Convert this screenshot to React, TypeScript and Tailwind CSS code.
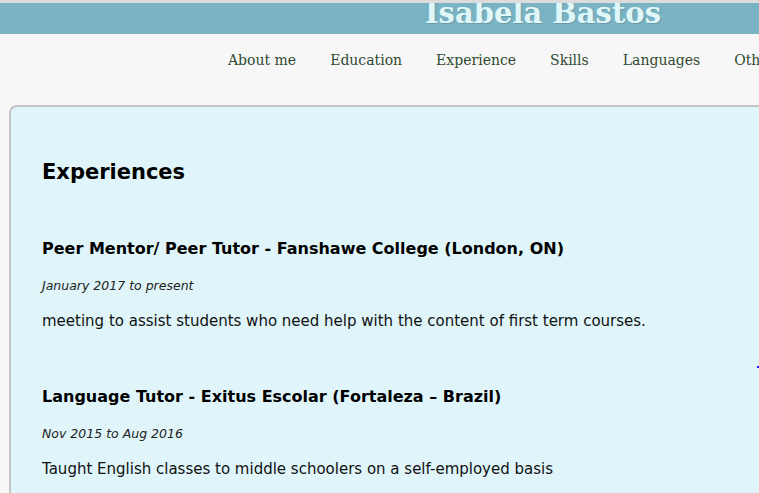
const navItems = ["About me", "Education", "Experience", "Skills", "Languages", "Others"]

const jobs = [
  {
    title: "Peer Mentor/ Peer Tutor - Fanshawe College (London, ON)",
    date: "January 2017 to present",
    text: "meeting to assist students who need help with the content of first term courses.",
  },
  {
    title: "Language Tutor - Exitus Escolar (Fortaleza – Brazil)",
    date: "Nov 2015 to Aug 2016",
    text: "Taught English classes to middle schoolers on a self-employed basis",
  },
]

export default function App() {
  return (
    <div className="h-[493px] w-[759px] overflow-hidden bg-[#f7f7f7]">
      {/* Header */}
      <div className="h-[3px] bg-[#dcdcdc]" />
      <div className="h-[31px] overflow-hidden bg-[#7ab4c4]">
        <div className="ml-[425px] mt-[-10px] whitespace-nowrap font-['DejaVu_Serif',serif] text-[29px] font-bold leading-[40px] text-[#e0f7fa] [text-shadow:1px_1px_1px_#6a9aa8]">
          Isabela Bastos
        </div>
      </div>

      {/* Nav */}
      <nav className="flex h-[52px] items-center gap-[34px] whitespace-nowrap pl-[228px] font-['DejaVu_Serif',serif] text-[14px] text-[#2f4a30]">
        {navItems.map((item) => (
          <span key={item}>{item}</span>
        ))}
      </nav>

      {/* Card */}
      <div className="relative ml-[9px] mt-[19px] h-[400px] rounded-tl-[8px] border-l-2 border-t-2 border-[#c4c4c4] bg-[#dff5fa] pl-[31px] pt-[50px] font-['DejaVu_Sans',sans-serif] text-black">
        <span className="absolute left-[746px] top-[259px] h-[2px] w-[2px] bg-[#2020ff]" />
        <h2 className="text-[21px] font-bold leading-[30px]">Experiences</h2>
        <div className="mt-[50px] flex flex-col gap-[53px]">
          {jobs.map((job) => (
            <div key={job.title}>
              <h3 className="text-[16px] font-bold leading-[24px]">{job.title}</h3>
              <p className="mt-[17px] text-[12.5px] italic leading-[16px] text-[#222]">{job.date}</p>
              <p className="mt-[16px] text-[15px] leading-[22px] text-[#111]">{job.text}</p>
            </div>
          ))}
        </div>
      </div>
    </div>
  )
}
